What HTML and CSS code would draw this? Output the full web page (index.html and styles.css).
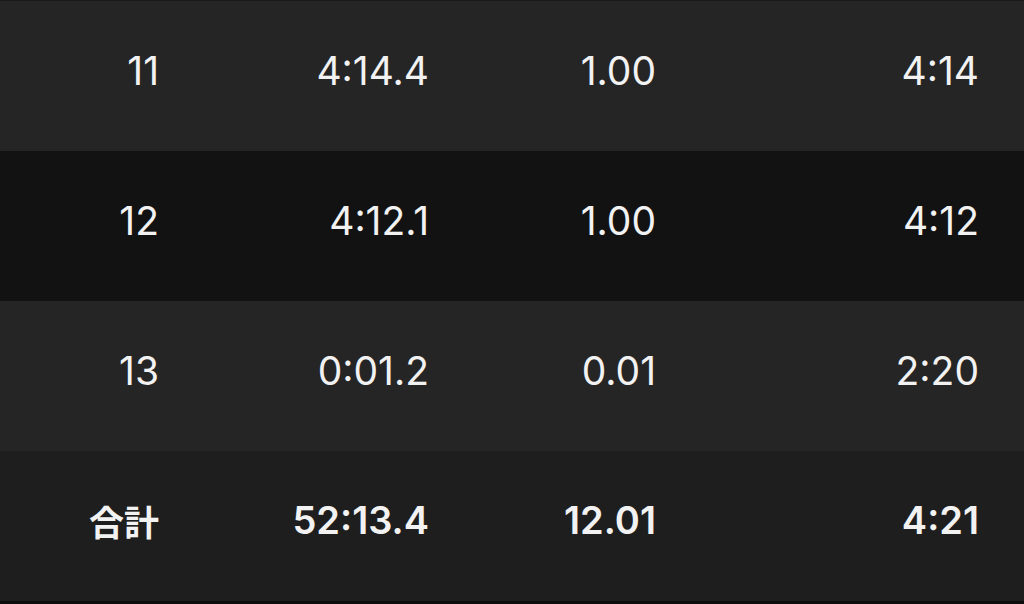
FILE: index.html
```html
<!DOCTYPE html>
<html lang="ja">
<head>
<meta charset="utf-8">
<title>Splits</title>
<link rel="stylesheet" href="styles.css">
</head>
<body>
<div class="table">
  <div class="row light">
    <span class="cell">11</span>
    <span class="cell">4:14.4</span>
    <span class="cell">1.00</span>
    <span class="cell">4:14</span>
  </div>
  <div class="row dark">
    <span class="cell">12</span>
    <span class="cell">4:12.1</span>
    <span class="cell">1.00</span>
    <span class="cell">4:12</span>
  </div>
  <div class="row light">
    <span class="cell">13</span>
    <span class="cell">0:01.2</span>
    <span class="cell">0.01</span>
    <span class="cell">2:20</span>
  </div>
  <div class="row total">
    <span class="cell">合計</span>
    <span class="cell">52:13.4</span>
    <span class="cell">12.01</span>
    <span class="cell">4:21</span>
  </div>
</div>
</body>
</html>
```
FILE: styles.css
```css
html, body {
  margin: 0;
  padding: 0;
  background: #0d0d0d;
}
body {
  width: 1024px;
  height: 604px;
  overflow: hidden;
  font-family: Inter, "Noto Sans CJK JP", sans-serif;
  color: #f2f2f2;
}
.table {
  border-top: 1px solid #1a1a1a;
  display: flex;
  flex-direction: column;
}
.row {
  height: 150px;
  box-sizing: border-box;
  display: grid;
  grid-template-columns: 159px 270px 227px 323px;
  align-items: center;
  padding-bottom: 12px;
  font-size: 39px;
  font-weight: 400;
}
.cell {
  text-align: right;
}
.light { background: #252525; }
.dark { background: #121212; }
.total {
  background: #1e1e1e;
  font-weight: 600;
  font-size: 38px;
}
.total .cell:first-child {
  font-family: "Noto Sans CJK JP", sans-serif;
  font-weight: 700;
  font-size: 35px;
}
```
